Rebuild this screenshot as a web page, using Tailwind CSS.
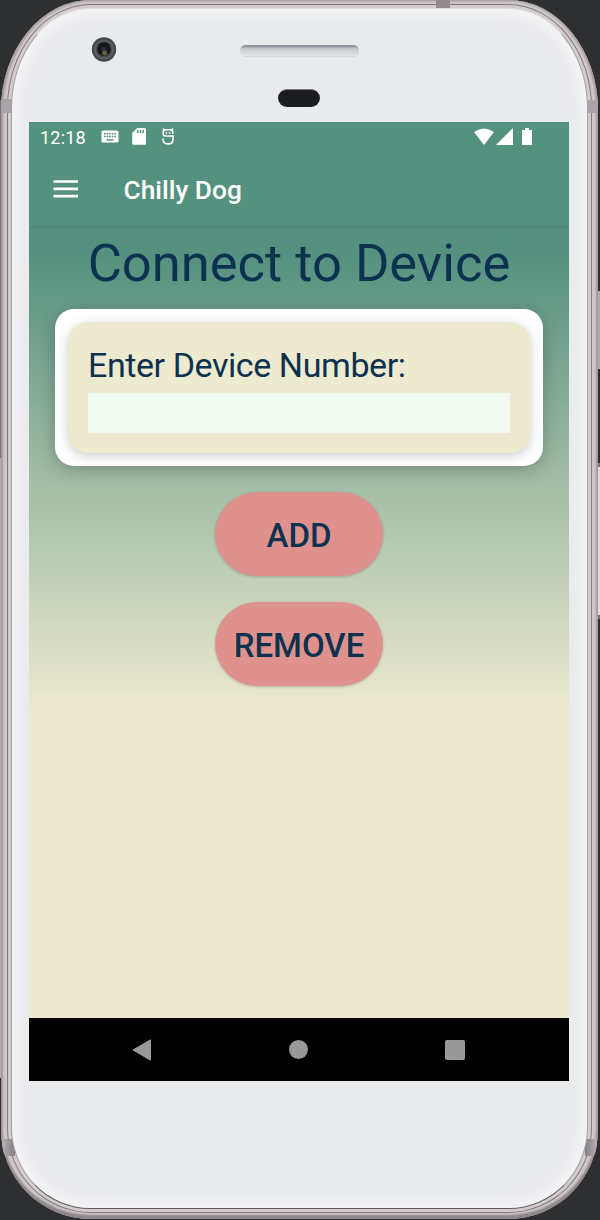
<!DOCTYPE html>
<html lang="en">
<head>
<meta charset="utf-8">
<title>Chilly Dog</title>
<script src="https://cdn.jsdelivr.net/npm/@tailwindcss/browser@4"></script>
</head>
<body class="bg-[#2d2f31]">
<div class="relative w-[600px] h-[1220px] overflow-hidden bg-[#2d2f31] font-['Roboto',sans-serif] text-[#0d324f]">
  <!-- side buttons -->
  <div class="absolute right-0 top-[291px] w-1 h-[78px] bg-[#a9abac]"></div>
  <div class="absolute right-0 top-[463px] w-1 h-[156px] bg-[#dedbdd] border-y-4 border-[#777577]"></div>
  <div class="absolute left-0 top-[100px] w-1 h-[358px] bg-[#77787a]"></div>
  <div class="absolute left-0 top-[458px] w-1 h-[620px] bg-[#b5b0b3]"></div>

  <!-- metal frame -->
  <div class="absolute left-px top-0 w-[597px] h-[1219px] rounded-[90px_90px_90px_90px/110px_110px_90px_90px] bg-[#cec6ca] shadow-[inset_0_-4px_2px_#8e868b,inset_2px_1px_2px_#a59da1,inset_-2px_0_2px_#a59da1]"></div>
  <div class="absolute left-[7px] top-1 w-[585px] h-[1209px] rounded-[84px_84px_84px_84px/104px_104px_85px_85px] border border-[#82797e] bg-[#d2cccf]"></div>
  <div class="absolute left-[436px] top-0 w-[14px] h-2 bg-[#928b8f]"></div>
  <div class="absolute left-[2px] top-[99px] w-[11px] h-[14px] bg-[#aaa3a7]"></div>
  <div class="absolute left-[587px] top-[100px] w-[11px] h-[13px] bg-[#aaa3a7]"></div>
  <div class="absolute left-[2px] top-[1139px] w-[13px] h-[17px] rounded-bl-[4px_17px] bg-linear-to-r from-[#b8b1b5] to-[#827b7f]"></div>
  <div class="absolute left-[585px] top-[1139px] w-[12px] h-[17px] rounded-br-[4px_17px] bg-linear-to-r from-[#827b7f] to-[#b8b1b5]"></div>
  <!-- front panel -->
  <div class="absolute left-[11px] top-2 w-[577px] h-[1201px] rounded-[79px_79px_79px_79px/100px_100px_82px_82px] border border-t-[#e2dfe1] border-x-[#a5a0a4] border-b-[#625f63] bg-[#eaebed] shadow-[inset_0_0_12px_6px_#f4f5f7]"></div>

  <!-- camera, speaker, sensor -->
  <div class="absolute left-[92px] top-[37px] size-6">
    <svg viewBox="0 0 24 24" class="size-6 overflow-visible"><circle cx="12" cy="12.500" r="12.200" fill="#47494d"/><circle cx="12" cy="12.500" r="9" fill="none" stroke="#5c5e62" stroke-width="2"/><circle cx="12" cy="12" r="6.800" fill="#15171d"/><circle cx="11.500" cy="12" r="2.400" fill="#272c3f"/><circle cx="12.700" cy="15.800" r="2.600" fill="#5f622e"/></svg>
  </div>
  <div class="absolute left-[240px] top-[45px] w-[119px] h-[11px] rounded-full bg-linear-to-b from-[#8b9198] from-10% via-[#c7cbcf] via-35% to-[#e3e5e8] shadow-[0_1px_1px_#d5d7da]"></div>
  <div class="absolute left-[278px] top-[89px] w-[42px] h-[18px] rounded-full bg-[#1b1d21] border-t border-[#777]"></div>

  <!-- screen -->
  <main class="absolute left-[29px] top-[122px] w-[540px] h-[959px] overflow-hidden flex flex-col">
    <header class="relative h-[104px] bg-[#55917f] shadow-[0_1px_3px_rgba(0,0,0,0.12)] text-white">
      <div class="h-[29px] flex items-center pl-[11px] pr-[37px]">
        <span class="w-[61px] text-[18px] leading-[29px] tracking-[0.2px] pt-[2px]">12:18</span>
        <svg class="w-[18px] h-[13px]" viewBox="0 0 18 13"><rect x=".5" y=".5" width="17" height="12" rx="1.600" fill="#fff"/><path d="M3 3.700h12M3 6.500h12" stroke="#55917f" stroke-width="1.600" stroke-dasharray="1.700 .85"/><path d="M5.600 10h6.800" stroke="#55917f" stroke-width="1.500"/></svg>
        <svg class="ml-[13px] w-[14px] h-[17px]" viewBox="0 0 14 17"><path d="M5.200 0h7.300Q14 0 14 1.500v13.700q0 1.500-1.500 1.500H1.700Q.2 16.700.2 15.200V5z" fill="#fff"/><path d="M5.700 1.800v3.200M8.500 1.800v3.200M11.200 1.800v3.200" stroke="#55917f" stroke-width="1.500"/></svg>
        <svg class="ml-[15px] w-[14px] h-[17px]" viewBox="0 0 14 17"><path d="M11.800 6V4.300Q11.800 1.700 9 1.700H5Q2.200 1.700 2.200 4.300v1.500Q2.200 8 4.500 8H12v3.200Q12 15.900 7 15.900T2 11.200v-.7" fill="none" stroke="#fff" stroke-width="1.600"/><path d="M1.800 3V0l3 1.500zM12.200 3V0l-3 1.500z" fill="#fff"/><path d="M4.600 5h1.600M7.900 5h1.600" stroke="#fff" stroke-width="1.400"/></svg>
        <svg class="ml-auto w-[20px] h-[17px]" viewBox="0 0 20 17"><path d="M0 4Q10-3.200 20 4L10 17z" fill="#fff"/></svg>
        <svg class="ml-[2px] w-[17px] h-[17px]" viewBox="0 0 17 17"><path d="M17 0v17H0z" fill="#fff"/></svg>
        <svg class="ml-[9px] w-[10px] h-[17px]" viewBox="0 0 10 17"><path d="M3 0h4v2h3v15H0V2h3z" fill="#fff"/></svg>
      </div>
      <div class="h-[75px] flex items-center pl-6">
        <svg class="w-[26px] h-[18px]" viewBox="0 0 26 18"><path d="M.5 1.500h24.500M.5 8.800h24.500M.5 16.100h24.500" stroke="#fff" stroke-width="2.700"/></svg>
        <h1 class="ml-[44.500px] mt-[2px] text-[26.300px] leading-[30px] font-medium">Chilly Dog</h1>
      </div>
    </header>
    <section class="h-[792px] flex flex-col items-center bg-linear-to-b from-[#55917f] from-[28px] to-[#eeeacf] to-[486px]">
      <h2 class="h-[83px] pt-[7px] text-[52.500px] leading-[61px] whitespace-nowrap">Connect to Device</h2>
      <div class="w-[488px] h-[156.500px] rounded-[19px] bg-white px-[13px] pt-[13px] shadow-[0_4px_18px_rgba(0,0,0,0.24)]">
        <div class="w-full h-[130.500px] rounded-[20px] bg-[#eeeacf] px-5 pt-[21px] shadow-[0_3px_12px_rgba(0,0,0,0.2)]">
          <label for="dev" class="block h-[49.500px] text-[34px] leading-[44px] tracking-[-0.420px] whitespace-nowrap">Enter Device Number:</label>
          <input id="dev" class="block w-full h-[40.500px] bg-[#f0faf1] px-2 text-2xl outline-none">
        </div>
      </div>
      <button class="mt-[26px] w-[168px] h-[84px] shrink-0 rounded-full bg-[#df928d] text-[33px] font-medium pt-1 shadow-[0_1px_3px_rgba(0,0,0,0.2)]">ADD</button>
      <button class="mt-[26.500px] w-[168px] h-[84px] shrink-0 rounded-full bg-[#df928d] text-[33px] font-medium pt-1 shadow-[0_1px_3px_rgba(0,0,0,0.2)]">REMOVE</button>
    </section>
    <nav class="h-[63px] bg-black flex items-center">
      <svg class="ml-[103px] w-5 h-[22px]" viewBox="0 0 20 22"><path d="M18.500.8v20.400L1 11z" fill="#999" stroke="#999" stroke-linejoin="round"/></svg>
      <div class="ml-[137px] size-[19px] rounded-full bg-[#999]"></div>
      <div class="ml-[137px] size-5 rounded-[2px] bg-[#999]"></div>
    </nav>
  </main>
</div>
</body>
</html>
